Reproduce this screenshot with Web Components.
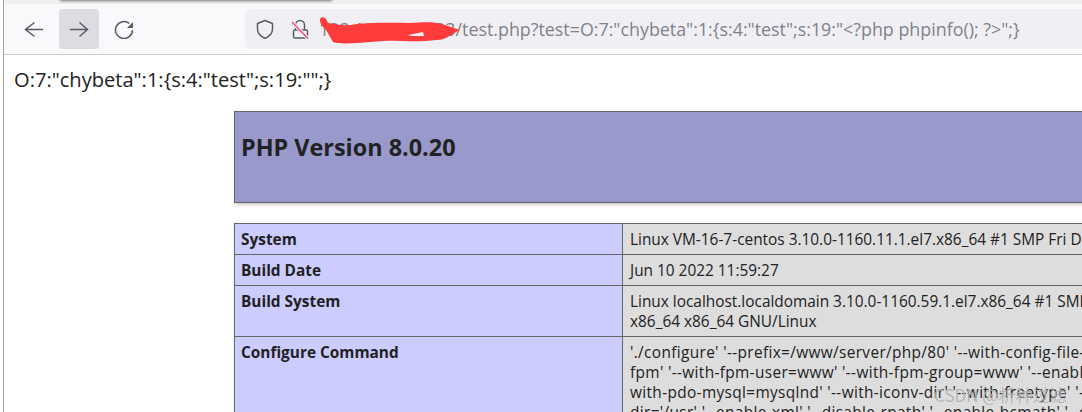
<!DOCTYPE html>
<html>
<head>
<meta charset="utf-8">
<title>test.php</title>
<style>
html, body { margin: 0; height: 100%; overflow: hidden; background: #fff; }
body { font-family: "Open Sans", "Noto Sans", sans-serif; color: #222; }
</style>
</head>
<body>
<browser-window>
    <browser-toolbar slot="toolbar"></browser-toolbar>
    <serialized-output>O:7:"chybeta":1:{s:4:"test";s:19:"";}</serialized-output>
    <php-info version="PHP Version 8.0.20">
        <info-row name="System">Linux VM-16-7-centos 3.10.0-1160.11.1.el7.x86_64 #1 SMP Fri Dec 18 16:34:56 UTC 2020 x86_64</info-row>
        <info-row name="Build Date">Jun 10 2022 11:59:27</info-row>
        <info-row name="Build System">Linux localhost.localdomain 3.10.0-1160.59.1.el7.x86_64 #1 SMP Wed Feb 23 16:47:03 UTC 2022<br>x86_64 x86_64 GNU/Linux</info-row>
        <info-row name="Configure Command" style="letter-spacing: .35px">'./configure' '--prefix=/www/server/php/80' '--with-config-file-path=/www/server/php/80/etc'<br>fpm' '--with-fpm-user=www' '--with-fpm-group=www' '--enable-mysqlnd' '--with-mysqli=mysqlnd'<br>with-pdo-mysql=mysqlnd' '--with-iconv-dir' '--with-freetype' '--with-jpeg' '--with-zlib'<br>dir='/usr' '--enable-xml' '--disable-rpath' '--enable-bcmath' '--enable-shmop'</info-row>
    </php-info>
    <span slot="watermark">CSDN @析种过滤</span>
</browser-window>

<script>
const windowTpl = document.createElement('template');
windowTpl.innerHTML = `
    <style>
    :host {
        display: flex;
        flex-direction: column;
        box-sizing: border-box;
        height: 412px;
        width: 1082px;
        margin-left: 3px;
        border-left: 1px solid #a0a0a0;
        position: relative;
        overflow: hidden;
    }
    .page {
        flex: 1;
        min-height: 0;
        background: #fff;
    }
    .wm {
        position: absolute;
        left: 930px;
        top: 382px;
        font: 17px "Noto Sans CJK SC", "Open Sans", sans-serif;
        color: rgba(165,165,165,0.8);
        text-shadow: 0 0 1px rgba(255,255,255,0.5);
        white-space: nowrap;
    }
    </style>
    <slot name="toolbar"></slot>
    <div class="page"><slot></slot></div>
    <div class="wm"><slot name="watermark"></slot></div>
`;
customElements.define('browser-window', class extends HTMLElement {
    constructor() {
        super();
        this.attachShadow({mode: 'open'}).appendChild(windowTpl.content.cloneNode(true));
    }
});

const toolbarTpl = document.createElement('template');
toolbarTpl.innerHTML = `
    <style>
    :host {
        display: block;
        position: relative;
        flex: none;
        height: 55px;
        box-sizing: border-box;
        background: #f9f9fb;
        border-top: 4px solid #f0f0f0;
        border-bottom: 1px solid #ccc;
    }
    .tab-shadow {
        position: absolute;
        left: 56px;
        top: -12px;
        width: 272px;
        height: 8px;
        box-shadow: 0 1px 3px rgba(0,0,0,0.5);
    }
    nav {
        display: flex;
        align-items: center;
        height: 100%;
        padding-left: 10px;
    }
    .btn {
        width: 40px;
        height: 40px;
        margin-right: 5px;
        border-radius: 4px;
        display: flex;
        align-items: center;
        justify-content: center;
    }
    .btn.active { background: #dcdde2; }
    svg { display: block; fill: none; stroke: #5b5b66; stroke-width: 1.5; }
    .url {
        margin-left: 96px;
        flex: 1;
        height: 40px;
        background: #f0f0f4;
        border-radius: 6px 0 0 6px;
        display: flex;
        align-items: center;
        position: relative;
        padding-left: 10px;
    }
    .lock { margin-left: 15px; }
    .addr {
        margin-left: 9px;
        font: 17.850px/24px "Open Sans", sans-serif;
        color: #818189;
        white-space: nowrap;
    }
    .scribble { position: absolute; left: 75px; top: 6px; stroke: none; }
    .scribble path { stroke: none; }
    </style>
    <div class="tab-shadow"></div>
    <nav>
        <div class="btn"><svg width="20" height="20" viewBox="0 0 20 20"><path d="M19 10.500H1.500M10.500 3.500 1.500 10.500 10.500 17.500"/></svg></div>
        <div class="btn active"><svg width="20" height="20" viewBox="0 0 20 20"><path d="M1 10.500H18.500M10.500 3.500 18.500 10.500 10.500 17.500"/></svg></div>
        <div class="btn"><svg width="20" height="20" viewBox="0 0 20 20"><path d="M18.500 11a8.500 8.500 0 1 1-3-6.500"/><path d="M19 3v6h-6z" fill="#5b5b66" stroke="none"/></svg></div>
        <div class="url">
            <svg width="20" height="20" viewBox="0 0 20 20" stroke-linejoin="round"><path d="M10 1.500 17.500 4.500V10C17.500 15 13 18 10 19.500 7 18 2.500 15 2.500 10V4.500z"/></svg>
            <svg class="lock" width="20" height="20" viewBox="0 0 20 20"><rect x="3.500" y="11" width="14" height="8" rx="1.500"/><path d="M5.500 11V6a4.500 4.500 0 0 1 9 0v5"/><path d="M2 3 18 19.500" stroke="#f0f0f4" stroke-width="3.500"/><path d="M2 3 18 19.500" stroke="#f0457a" stroke-width="1.400"/></svg>
            <span class="addr">123.123.123.123/test.php?test=O:7:"chybeta":1:{s:4:"test";s:19:"&lt;?php phpinfo(); ?&gt;";}</span>
            <svg class="scribble" width="142" height="29" viewBox="0 0 142 29"><path fill="#ff3b3b" d="M0 5C0 1 6 1 8 8 16 9 22 11 30 10 50 7 70 8 90 8 105 7 115 7 122 9L140 15C130 20 125 25 117 25 100 27 90 26 80 26 65 25 55 27 37 28 25 29 15 28 13 27 10 22 8 18 6 15 3 12 0 9 0 5z"/><path fill="#f0f0f4" d="M88 20 103 17 104 21 92 21z"/></svg>
        </div>
    </nav>
`;
customElements.define('browser-toolbar', class extends HTMLElement {
    constructor() {
        super();
        this.attachShadow({mode: 'open'}).appendChild(toolbarTpl.content.cloneNode(true));
    }
});

const outputTpl = document.createElement('template');
outputTpl.innerHTML = `
    <style>
    :host {
        display: block;
        padding: 10px 0 0 10px;
        font: 20.100px/30px "Open Sans", sans-serif;
        color: #222;
        white-space: nowrap;
    }
    </style>
    <slot></slot>
`;
customElements.define('serialized-output', class extends HTMLElement {
    constructor() {
        super();
        this.attachShadow({mode: 'open'}).appendChild(outputTpl.content.cloneNode(true));
    }
});

const phpTpl = document.createElement('template');
phpTpl.innerHTML = `
    <style>
    :host {
        display: block;
        margin: 16px 0 0 230px;
        width: 1000px;
    }
    header {
        height: 92px;
        box-sizing: border-box;
        background: #9999cc;
        border: 1px solid #666;
        box-shadow: 1px 2px 3px #ccc;
        padding: 17px 6px;
        margin-bottom: 20px;
    }
    h1 {
        margin: 0;
        font: 700 23.400px/36px "Open Sans", sans-serif;
        color: #222;
    }
    .rows {
        border-top: 1px solid #666;
        border-left: 1px solid #666;
        box-shadow: 1px 2px 3px #ccc;
    }
    </style>
    <header><h1></h1></header>
    <div class="rows"><slot></slot></div>
`;
customElements.define('php-info', class extends HTMLElement {
    constructor() {
        super();
        this.attachShadow({mode: 'open'}).appendChild(phpTpl.content.cloneNode(true));
        this.shadowRoot.querySelector('h1').textContent = this.getAttribute('version');
    }
});

const rowTpl = document.createElement('template');
rowTpl.innerHTML = `
    <style>
    :host {
        display: grid;
        grid-template-columns: 387px 1fr;
        font: 15.400px/20px "Open Sans", sans-serif;
        color: #222;
        border-bottom: 1px solid #666;
    }
    .k {
        background: #ccccff;
        font-weight: 700;
        letter-spacing: normal;
        padding: 6px 6px 4px;
    }
    .v {
        background: #dddddd;
        border-left: 1px solid #666;
        padding: 6px 7px 4px;
        white-space: nowrap;
        overflow: hidden;
    }
    </style>
    <div class="k"></div>
    <div class="v"><slot></slot></div>
`;
customElements.define('info-row', class extends HTMLElement {
    constructor() {
        super();
        this.attachShadow({mode: 'open'}).appendChild(rowTpl.content.cloneNode(true));
        this.shadowRoot.querySelector('.k').textContent = this.getAttribute('name');
    }
});
</script>
</body>
</html>
